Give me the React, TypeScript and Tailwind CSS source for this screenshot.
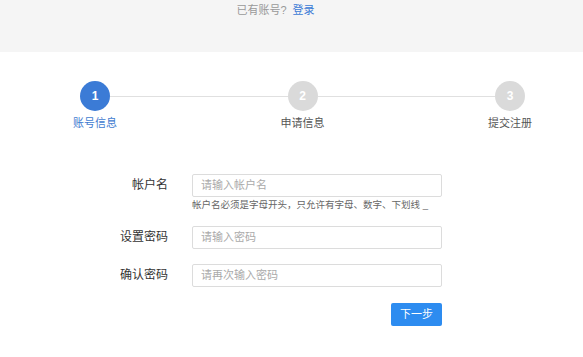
import React from "react";

const steps = [
  { n: 1, label: "账号信息", active: true },
  { n: 2, label: "申请信息", active: false },
  { n: 3, label: "提交注册", active: false },
];

function Step({ n, label, active }: { n: number; label: string; active: boolean }) {
  return (
    <div className="flex flex-col items-center w-[30px]">
      <div
        className={
          active
            ? "w-[30px] h-[30px] rounded-full bg-[#3b7bd6] text-white flex items-center justify-center text-[12px] font-bold"
            : "w-[30px] h-[30px] rounded-full bg-[#dadada] text-white flex items-center justify-center text-[12px] font-bold"
        }
      >
        {n}
      </div>
      <span
        className={
          active
            ? "mt-[4px] whitespace-nowrap text-[11px] text-[#3f7bd0]"
            : "mt-[4px] whitespace-nowrap text-[11px] text-[#555]"
        }
      >
        {label}
      </span>
    </div>
  );
}

function Field({ label, placeholder }: { label: string; placeholder: string }) {
  return (
    <div className="flex items-center">
      <label className="w-[68px] text-right text-[12px] text-[#333]">{label}</label>
      <input
        className="ml-[24px] w-[250px] h-[23px] border border-[#dcdcdc] rounded-[2px] px-[8px] text-[11px] text-[#333] placeholder:text-[#aaa] outline-none"
        placeholder={placeholder}
      />
    </div>
  );
}

export default function App() {
  return (
    <div className="w-[583px] h-[357px] bg-white font-['Liberation_Sans','Noto_Sans_CJK_SC',sans-serif] overflow-hidden">
      {/* top band */}
      <div className="h-[52px] bg-[#f5f5f5] flex justify-center pt-[2px] pr-[32px]">
        <p className="text-[11px] leading-[16px] text-[#999]">
          已有账号?
          <a className="ml-[6px] text-[#3b7bd6]">登录</a>
        </p>
      </div>

      {/* steps */}
      <div className="flex pl-[80px] pr-[58px] mt-[29px]">
        <Step {...steps[0]} />
        <div className="flex-1 h-px bg-[#e0e0e0] mt-[15px]" />
        <Step {...steps[1]} />
        <div className="flex-1 h-px bg-[#e0e0e0] mt-[15px]" />
        <Step {...steps[2]} />
      </div>

      {/* form */}
      <div className="pl-[100px] mt-[42px] flex flex-col">
        <Field label="帐户名" placeholder="请输入帐户名" />
        <p className="ml-[92px] mt-[1px] text-[9.5px] leading-[13px] text-[#666]">
          帐户名必须是字母开头，只允许有字母、数字、下划线 _
        </p>
        <div className="mt-[15px]">
          <Field label="设置密码" placeholder="请输入密码" />
        </div>
        <div className="mt-[15px]">
          <Field label="确认密码" placeholder="请再次输入密码" />
        </div>
        <div className="w-[342px] flex justify-end mt-[16px]">
          <button className="w-[51px] h-[23px] rounded-[2px] bg-[#2d8cf0] text-white text-[11px]">
            下一步
          </button>
        </div>
      </div>
    </div>
  );
}
